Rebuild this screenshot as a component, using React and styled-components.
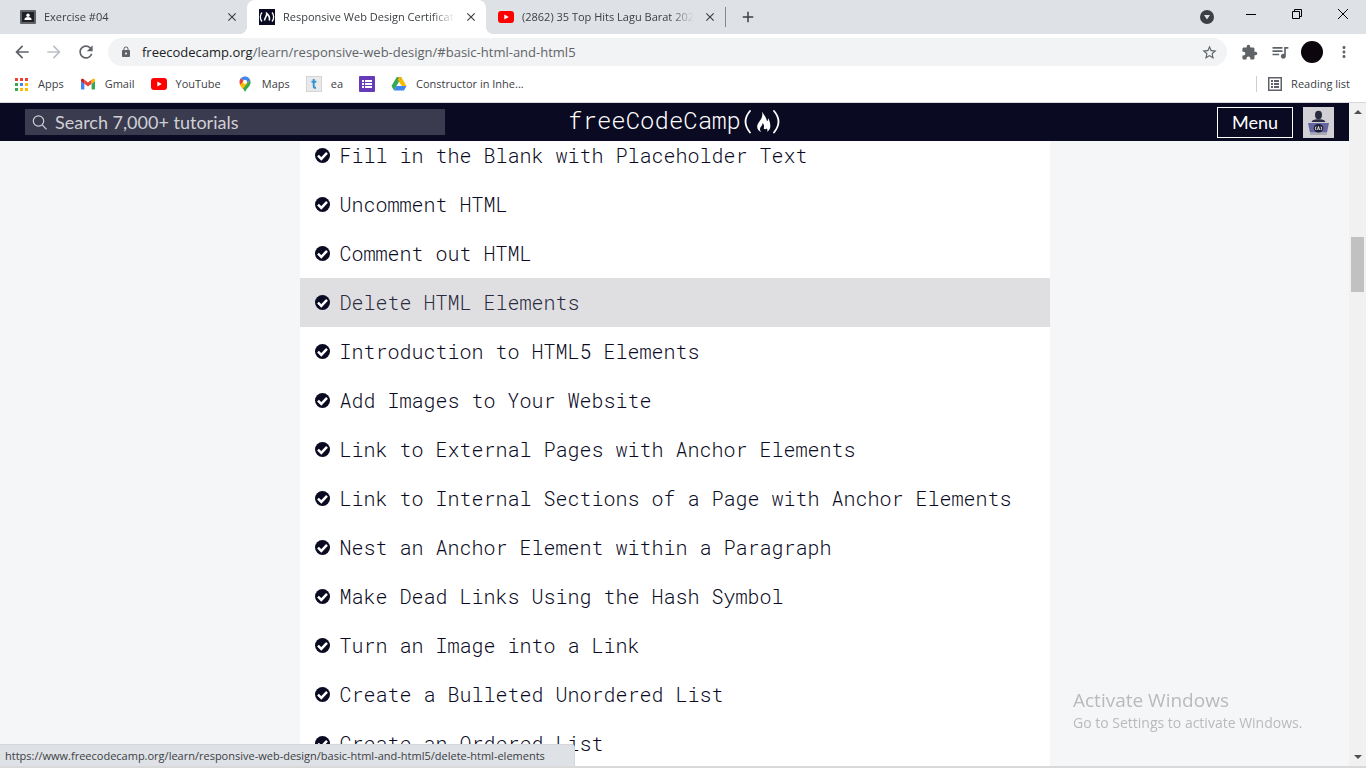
import React from "react";
import styled, { createGlobalStyle, css } from "styled-components";
import {
  MdArrowBack,
  MdArrowForward,
  MdRefresh,
  MdLock,
  MdStarBorder,
  MdExtension,
  MdQueueMusic,
  MdMoreVert,
  MdClose,
  MdAdd,
} from "react-icons/md";

const GlobalStyle = createGlobalStyle`
  *, *::before, *::after { box-sizing: border-box; }
  body {
    margin: 0;
    overflow: hidden;
    font-family: "Segoe UI", "Open Sans", "Noto Sans", sans-serif;
    font-size: 11px;
    color: #3c4043;
  }
  button, input { font: inherit; color: inherit; }
  button { background: none; border: 0; padding: 0; margin: 0; }
  a { color: inherit; text-decoration: none; }
  svg { display: block; flex: none; }
`;

const Window = styled.div`
  display: flex;
  flex-direction: column;
  height: 100vh;
  background: #fff;
  border-bottom: 2px solid #d9d9d9;
`;

const TabStrip = styled.div`
  display: flex;
  flex: none;
  height: 34px;
  padding-left: 8px;
  background: #dee1e6;
`;

const Tab = styled.div`
  position: relative;
  display: flex;
  align-items: center;
  gap: 8px;
  width: 239px;
  padding: 0 7px 0 12px;
  ${(p) =>
    p.$active &&
    css`
      background: #fff;
      border-radius: 8px 8px 0 0;
      &::before,
      &::after {
        content: "";
        position: absolute;
        bottom: 0;
        width: 8px;
        height: 8px;
      }
      &::before {
        right: 100%;
        background: radial-gradient(circle at 0 0, transparent 8px, #fff 8px);
      }
      &::after {
        left: 100%;
        background: radial-gradient(circle at 100% 0, transparent 8px, #fff 8px);
      }
    `}
`;

const TabTitle = styled.span`
  flex: 1;
  overflow: hidden;
  white-space: nowrap;
  line-height: 16px;
  mask-image: linear-gradient(to right, #000 calc(100% - 24px), transparent);
`;

const IconButton = styled.button`
  display: flex;
  align-items: center;
  justify-content: center;
  width: ${(p) => p.$size || 16}px;
  height: ${(p) => p.$size || 16}px;
  color: ${(p) => p.$color || "#5f6368"};
`;

const NewTab = styled.div`
  display: flex;
  align-items: center;
  padding-left: 12px;
  height: 20px;
  margin: 7px 0;
  border-left: 1px solid #80868b;
`;

const TabSearch = styled(IconButton)`
  align-self: center;
  margin-left: auto;
  margin-right: 28px;
`;

const WindowControls = styled.div`
  display: flex;
  align-items: center;
  height: 28px;
  gap: 30px;
  padding-right: 15px;
`;

const Toolbar = styled.div`
  display: flex;
  flex: none;
  align-items: center;
  height: 36px;
  gap: 12px;
  padding: 0 12px;
`;

const ToolGroup = styled.div`
  display: flex;
  align-items: center;
  gap: ${(p) => p.$gap}px;
`;

const Address = styled.div`
  display: flex;
  flex: 1;
  align-items: center;
  gap: 10px;
  height: 28px;
  padding: 0 10px 0 12px;
  border-radius: 14px;
  background: #f1f3f4;
  color: #5f6368;
`;

const Url = styled.a`
  flex: 1;
  font-size: 13px;
  line-height: 20px;
  color: #5f6368;
  b {
    font-weight: 400;
    color: #202124;
  }
`;

const Avatar = styled.button`
  width: 22px;
  height: 22px;
  border-radius: 50%;
  background: #0b060d;
`;

const Bookmarks = styled.nav`
  display: flex;
  flex: none;
  align-items: center;
  height: 33px;
  gap: 16px;
  padding: 0 14px;
  padding-bottom: 4px;
  border-bottom: 1px solid #d6d8dc;
`;

const Bookmark = styled.a`
  display: flex;
  align-items: center;
  gap: 9px;
  line-height: 16px;
  white-space: nowrap;
`;

const ReadingList = styled.button`
  display: flex;
  align-items: center;
  gap: 9px;
  height: 16px;
  margin-left: auto;
  padding-left: 11px;
  padding-right: 2px;
  border-left: 1px solid #ccced1;
  line-height: 16px;
`;

const Body = styled.div`
  display: flex;
  flex: 1;
  min-height: 0;
`;

const Site = styled.div`
  display: flex;
  flex: 1;
  flex-direction: column;
  overflow: hidden;
  background: #f5f6f7;
`;

const SiteNav = styled.header`
  display: grid;
  flex: none;
  grid-template-columns: 1fr auto 1fr;
  align-items: center;
  height: 38px;
  padding: 0 15px;
  background: #0a0a23;
  font-family: Lato, sans-serif;
  font-size: 18px;
  z-index: 1;
`;

const Search = styled.label`
  display: flex;
  align-items: center;
  gap: 8px;
  width: 420px;
  height: 26px;
  margin-left: 10px;
  padding: 0 7px;
  background: #3b3b4f;
  color: #d0d0d5;
  input {
    flex: 1;
    min-width: 0;
    padding: 0;
    border: 0;
    background: none;
    outline: 0;
  }
  input::placeholder {
    color: #d0d0d5;
    opacity: 1;
  }
`;

const Logo = styled.a`
  display: flex;
  align-items: center;
  gap: 2px;
  height: 38px;
  color: #fff;
  font-family: "Roboto Mono", "Liberation Mono", monospace;
  font-size: 24px;
  font-weight: 350;
  line-height: 28px;
  span {
    padding-bottom: 4px;
  }
`;

const NavActions = styled.div`
  display: flex;
  justify-content: flex-end;
  gap: 10px;
`;

const MenuButton = styled.button`
  width: 76px;
  height: 31px;
  border: 1px solid #fff;
  color: #fff;
`;

const Lessons = styled.ul`
  width: 750px;
  max-width: 100%;
  margin: -10px auto 0;
  padding: 0;
  list-style: none;
  background: #fff;
`;

const Lesson = styled.li`
  background: ${(p) => (p.$hovered ? "#dfdfe2" : "#fff")};
  a {
    display: flex;
    align-items: center;
    gap: 10px;
    height: 49px;
    padding: 0 15px;
    color: ${(p) => (p.$hovered ? "#2a2a40" : "#0a0a23")};
    font-family: "Roboto Mono", "DejaVu Sans Mono", monospace;
    font-size: 20px;
    font-weight: 350;
    line-height: 24px;
    white-space: nowrap;
  }
  span {
    padding-bottom: 2px;
  }
`;

const Scrollbar = styled.div`
  display: flex;
  flex-direction: column;
  align-items: center;
  justify-content: space-between;
  width: 17px;
  padding: 6px 0;
  background: #f1f1f1;
`;

const Thumb = styled.div`
  width: 13px;
  height: 55px;
  margin: 123px 0 auto;
  background: #c1c1c1;
`;

const StatusBubble = styled.div`
  position: fixed;
  left: 0;
  bottom: 2px;
  z-index: 2;
  width: 575px;
  height: 22px;
  padding: 0 5px;
  border: 1px solid #d3d6da;
  border-left: 0;
  border-bottom: 0;
  border-top-right-radius: 4px;
  background: #dee1e6;
  line-height: 22px;
  white-space: nowrap;
`;

const Watermark = styled.div`
  position: fixed;
  right: 56px;
  bottom: 35px;
  z-index: 2;
  width: 237px;
  color: #b9babb;
  font-size: 14px;
  line-height: 20px;
  white-space: nowrap;
  strong {
    display: block;
    font-size: 19px;
    font-weight: 400;
    line-height: 26px;
  }
`;

const YouTubeIcon = () => (
  <svg width="16" height="16" viewBox="0 0 16 16">
    <rect y="2" width="16" height="12" rx="3" fill="#f00" />
    <path d="M6.3 5.4v5.2L10.8 8z" fill="#fff" />
  </svg>
);

const ClassroomIcon = () => (
  <svg width="16" height="16" viewBox="0 0 16 16">
    <rect y="1" width="16" height="14" rx="1" fill="#5f6368" />
    <rect x="2" y="3" width="12" height="10" fill="#202124" />
    <circle cx="8" cy="6.2" r="1.7" fill="#fff" />
    <path d="M4.5 11V10c0-1.300 2-2 3.500-2s3.500.7 3.500 2v1z" fill="#fff" />
  </svg>
);

const FccIcon = () => (
  <svg width="16" height="16" viewBox="0 0 16 16">
    <rect width="16" height="16" fill="#0a0a23" />
    <g fill="none" stroke="#fff" strokeWidth="1.300">
      <path d="M3 3.500C.8 6 .8 10 3 12.500M13 3.500c2.200 2.500 2.200 6.500 0 9" />
      <path d="M5.600 11.500C5.400 9 8 7.500 7.700 4.500c2 1.500 3.200 4.500 2.600 7" strokeWidth="1.600" />
    </g>
  </svg>
);

const AppsIcon = () => {
  const colors = ["#ea4335", "#ea4335", "#ea4335", "#34a853", "#4285f4", "#fbbc04", "#34a853", "#fbbc04", "#fbbc04"];
  return (
    <svg width="15" height="15" viewBox="0 0 15 15">
      {colors.map((c, i) => (
        <rect key={i} x={1 + (i % 3) * 5} y={1 + Math.floor(i / 3) * 5} width="3" height="3" fill={c} />
      ))}
    </svg>
  );
};

const GmailIcon = () => (
  <svg width="16" height="16" viewBox="0 0 16 16">
    <path d="M1 5v7.500c0 .6.400 1 1 1h2.400V7.500z" fill="#4285f4" />
    <path d="M11.600 13.500H14c.6 0 1-.4 1-1V5l-3.400 2.500z" fill="#34a853" />
    <path d="M4.400 3.800v3.900L8 10.400l3.600-2.700V3.800L8 6.500z" fill="#ea4335" />
    <path d="M1 4v1.200l3.400 2.500V3.800l-1-.7C2.400 2.300 1 2.900 1 4z" fill="#c5221f" />
    <path d="M11.600 3.800v3.900L15 5.200V4c0-1.100-1.400-1.700-2.400-.9z" fill="#fbbc04" />
  </svg>
);

const MapsIcon = () => (
  <svg width="16" height="16" viewBox="0 0 16 16">
    <path d="M3.500 9.300c1.200 2.100 3.300 3.400 3.900 5.800.2.900 1 .9 1.200 0 .7-2.700 4.900-4.600 4.900-9.200z" fill="#34a853" />
    <path d="M8 .5c1.600 0 4.300 1 5.300 3.900L5.700 13C4.900 11.700 3.900 10.800 3.200 9l6.300-7.500z" fill="#fbbc04" />
    <path d="M3.200 9A7 7 0 0 1 2.500 5.900c0-1.500.5-2.600 1.300-3.600L7.600 5z" fill="#ea4335" />
    <path d="M3.800 2.500C5 1 6.500.5 8 .5c2.300 0 4.400 1.400 5.200 3.700L10.300 7z" fill="#4285f4" />
    <path d="M13.200 4c.8 2.800-.3 4.600-1.600 6.300L6 13z" fill="#34a853" />
    <path d="M3.200 9 6 5.800 9.800 7.600 5.700 12.500z" fill="#fbbc04" />
    <circle cx="8" cy="5.800" r="2.100" fill="#fff" />
  </svg>
);

const TIcon = () => (
  <svg width="16" height="16" viewBox="0 0 16 16">
    <rect x=".5" y=".5" width="15" height="15" fill="#e9e9e9" stroke="#d5d5d5" />
    <path d="M7.700 3v7.500q0 1.700 2.300 1M5.500 5.700h4.800" fill="none" stroke="#2f95d8" strokeWidth="1.900" />
  </svg>
);

const FormsIcon = () => (
  <svg width="16" height="16" viewBox="0 0 16 16">
    <rect width="16" height="16" rx="1" fill="#673ab7" />
    <path d="M3 4h2v2H3zM6 4h7v2H6zM3 7h2v2H3zM6 7h7v2H6zM3 10h2v2H3zM6 10h7v2H6z" fill="#fff" />
  </svg>
);

const DriveIcon = () => (
  <svg width="16" height="16" viewBox="0 0 16 16">
    <path d="M5.400 1.500h5.200l4.900 8.600h-5z" fill="#fbbc04" />
    <path d="M5.400 1.500.5 10l2.500 4.400L8 5.900z" fill="#34a853" />
    <path d="M5.500 10h10L13 14.400H3z" fill="#4285f4" />
    <path d="M8 5.900 5.500 10h5z" fill="#fff" />
    <path d="M5.400 1.500h5.200L8 5.900z" fill="#188038" />
    <path d="M8 1.500h2.600L8 5.900 6.700 3.700z" fill="#fbbc04" />
  </svg>
);

const ReadingIcon = () => (
  <svg width="14" height="14" viewBox="0 0 14 14" fill="#5f6368">
    <path d="M0 0h14v14H0zm1.500 1.500v11h11v-11z" fillRule="evenodd" />
    <path d="M3 3h2v2H3zM6 3h5v2H6zM3 6h2v2H3zM6 6h5v2H6zM3 9h2v2H3zM6 9h5v2H6z" />
  </svg>
);

const SearchIcon = () => (
  <svg width="15" height="15" viewBox="0 0 15 15" fill="none" stroke="#d0d0d5" strokeWidth="1.200">
    <circle cx="6.500" cy="6" r="5.200" />
    <path d="m10.200 9.800 4.300 4.500" />
  </svg>
);

const PassedIcon = () => (
  <svg width="15" height="15" viewBox="0 0 15 15">
    <circle cx="7.500" cy="7.500" r="7.500" fill="#0a0a23" />
    <path d="m3 7.700 3.300 3.200L12 4.800" fill="none" stroke="#fff" strokeWidth="2.500" />
  </svg>
);

const FlameMark = () => (
  <svg width="38" height="28" viewBox="0 0 38 28">
    <g fill="none" stroke="#fff" strokeWidth="1.800" strokeLinecap="round">
      <path d="M7 3Q-2 13.500 7 24.500M31 3q9 10.500 0 21.500" />
    </g>
    <path
      d="M19 3.500c1.500 3 4.500 5.600 5 9.800.8-.5 1.200-1.800 1-3.300 1.600 2.700 2.300 4.500 2.300 8 .2 2.500-1 4.500-3.300 6 .8-1.500.5-3-.3-3.600-.6 1-2.400 1-3 0 .6-2.200.2-4.200-1.100-5.300.2 2.700-2.600 4-2.600 6 0 1.300.6 2.300 1.400 3-3-1-4.700-3.500-4.100-6.700.8-4 6.600-7 4.700-13.900z"
      fill="#fff"
    />
  </svg>
);

const CamperAvatar = () => (
  <svg width="31" height="31" viewBox="0 0 31 31">
    <rect width="31" height="31" fill="#d0d0d5" />
    <ellipse cx="15.500" cy="8" rx="3.500" ry="4.200" fill="#2a2a40" />
    <path d="M8.500 15c.5-2 3-2.200 5.500-2.700h3c2.500.5 5 .7 5.500 2.700z" fill="#2a2a40" />
    <path d="M5 16h21l-2 9.500H7z" fill="#6464a0" />
    <path d="M7 26.500h17v1H7z" fill="#858591" />
    <ellipse cx="15.500" cy="21.300" rx="4.800" ry="4.200" fill="#1b1b32" />
    <path d="M13 19.500q-1.300 1.800 0 3.600M18 19.500q1.300 1.800 0 3.600M14.500 23l1-3.500 1 3.500" fill="none" stroke="#fff" strokeWidth=".9" />
  </svg>
);

const tabs = [
  { title: "Exercise #04", Icon: ClassroomIcon },
  { title: "Responsive Web Design Certification", Icon: FccIcon, active: true },
  { title: "(2862) 35 Top Hits Lagu Barat 2021", Icon: YouTubeIcon },
];

const bookmarks = [
  { label: "Apps", Icon: AppsIcon },
  { label: "Gmail", Icon: GmailIcon },
  { label: "YouTube", Icon: YouTubeIcon },
  { label: "Maps", Icon: MapsIcon },
  { label: "ea", Icon: TIcon },
  { label: "", Icon: FormsIcon },
  { label: "Constructor in Inhe...", Icon: DriveIcon },
];

const lessons = [
  "Fill in the Blank with Placeholder Text",
  "Uncomment HTML",
  "Comment out HTML",
  "Delete HTML Elements",
  "Introduction to HTML5 Elements",
  "Add Images to Your Website",
  "Link to External Pages with Anchor Elements",
  "Link to Internal Sections of a Page with Anchor Elements",
  "Nest an Anchor Element within a Paragraph",
  "Make Dead Links Using the Hash Symbol",
  "Turn an Image into a Link",
  "Create a Bulleted Unordered List",
  "Create an Ordered List",
];

export default function App() {
  return (
    <Window>
      <GlobalStyle />
      <TabStrip>
        {tabs.map(({ title, Icon, active }) => (
          <Tab key={title} $active={active}>
            <Icon />
            <TabTitle>{title}</TabTitle>
            <IconButton $color="#3c4043" aria-label="Close tab">
              <MdClose size={14} />
            </IconButton>
          </Tab>
        ))}
        <NewTab>
          <IconButton $size={20} $color="#3c4043" aria-label="New tab">
            <MdAdd size={18} />
          </IconButton>
        </NewTab>
        <TabSearch aria-label="Search tabs">
          <svg width="14" height="14" viewBox="0 0 14 14">
            <circle cx="7" cy="7" r="7" fill="#3c4043" />
            <path d="M4 5h6L7 9.500z" fill="#dee1e6" />
          </svg>
        </TabSearch>
        <WindowControls>
          <IconButton aria-label="Minimize">
            <svg width="10" height="10" viewBox="0 0 10 10">
              <path d="M0 5.500h10" stroke="#000" />
            </svg>
          </IconButton>
          <IconButton aria-label="Restore">
            <svg width="10" height="10" viewBox="0 0 10 10" fill="none" stroke="#000">
              <path d="M.5 2.500h7v7h-7zM2.500 2.500v-2h7v7h-2" />
            </svg>
          </IconButton>
          <IconButton aria-label="Close">
            <svg width="10" height="10" viewBox="0 0 10 10" stroke="#000">
              <path d="m0 0 10 10M10 0 0 10" />
            </svg>
          </IconButton>
        </WindowControls>
      </TabStrip>

      <Toolbar>
        <ToolGroup $gap={12}>
          <IconButton $size={20} aria-label="Back">
            <MdArrowBack size={20} />
          </IconButton>
          <IconButton $size={20} $color="#bdc1c6" aria-label="Forward">
            <MdArrowForward size={20} />
          </IconButton>
          <IconButton $size={20} aria-label="Reload">
            <MdRefresh size={20} />
          </IconButton>
        </ToolGroup>
        <Address>
          <MdLock size={12} />
          <Url href="#basic-html-and-html5">
            <b>freecodecamp.org</b>/learn/responsive-web-design/#basic-html-and-html5
          </Url>
          <IconButton aria-label="Bookmark this page">
            <MdStarBorder size={17} />
          </IconButton>
        </Address>
        <ToolGroup $gap={11}>
          <IconButton $size={20} aria-label="Extensions">
            <MdExtension size={17} />
          </IconButton>
          <IconButton $size={20} aria-label="Media controls">
            <MdQueueMusic size={20} />
          </IconButton>
          <Avatar aria-label="Profile" />
          <IconButton $size={20} aria-label="More">
            <MdMoreVert size={18} />
          </IconButton>
        </ToolGroup>
      </Toolbar>

      <Bookmarks>
        {bookmarks.map(({ label, Icon }) => (
          <Bookmark key={label} href="#bookmark" aria-label={label || "Forms"}>
            <Icon />
            {label && <span>{label}</span>}
          </Bookmark>
        ))}
        <ReadingList>
          <ReadingIcon />
          Reading list
        </ReadingList>
      </Bookmarks>

      <Body>
        <Site>
          <SiteNav>
            <Search>
              <SearchIcon />
              <input type="text" aria-label="Search" placeholder="Search 7,000+ tutorials" />
            </Search>
            <Logo href="#learn">
              <span>freeCodeCamp</span>
              <FlameMark />
            </Logo>
            <NavActions>
              <MenuButton>Menu</MenuButton>
              <a href="#profile" aria-label="Profile">
                <CamperAvatar />
              </a>
            </NavActions>
          </SiteNav>
          <Lessons>
            {lessons.map((lesson) => (
              <Lesson key={lesson} $hovered={lesson === "Delete HTML Elements"}>
                <a href="#lesson">
                  <PassedIcon />
                  <span>{lesson}</span>
                </a>
              </Lesson>
            ))}
          </Lessons>
        </Site>
        <Scrollbar>
          <svg width="8" height="5" viewBox="0 0 8 5">
            <path d="M0 5h8L4 1z" fill="#505050" />
          </svg>
          <Thumb />
          <svg width="8" height="5" viewBox="0 0 8 5">
            <path d="M0 0h8L4 4z" fill="#505050" />
          </svg>
        </Scrollbar>
      </Body>

      <StatusBubble>
        https://www.freecodecamp.org/learn/responsive-web-design/basic-html-and-html5/delete-html-elements
      </StatusBubble>
      <Watermark>
        <strong>Activate Windows</strong>
        Go to Settings to activate Windows.
      </Watermark>
    </Window>
  );
}
